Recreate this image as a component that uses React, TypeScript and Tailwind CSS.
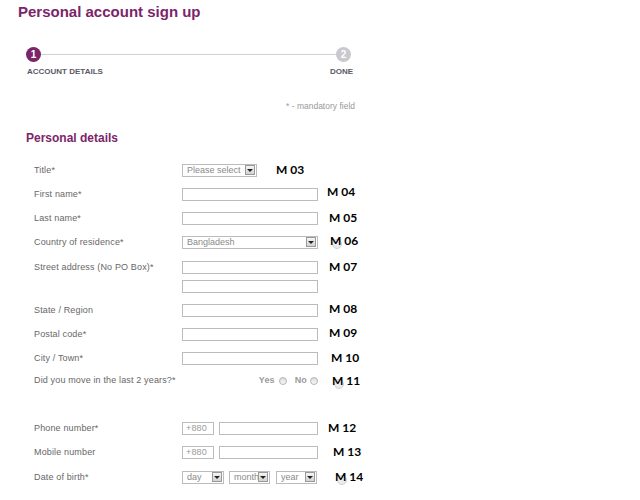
import type { ReactNode } from "react";

const Arrow = () => (
  <span className="flex h-[10px] w-[10px] shrink-0 items-center justify-center border border-[#999] bg-linear-to-b from-[#f6f6f6] to-[#d2d2d2]">
    <span className="h-0 w-0 border-x-[3px] border-t-[3px] border-x-transparent border-t-[#222]" />
  </span>
);

const Select = ({ w, text }: { w: string; text: string }) => (
  <div className={`flex h-[13px] shrink-0 items-center justify-between border border-[#bcbcbc] bg-white pl-[4px] pr-[1px] ${w}`}>
    <span className="overflow-hidden whitespace-nowrap text-[9px] leading-none tracking-normal text-[#8a8a8a]">{text}</span>
    <Arrow />
  </div>
);

const Input = ({ w = "w-[136px]", value, className = "" }: { w?: string; value?: string; className?: string }) => (
  <input
    type="text"
    readOnly
    defaultValue={value}
    className={`h-[13px] shrink-0 border border-[#bcbcbc] bg-white px-[3px] text-[9px] leading-none text-[#9a9a9a] outline-none ${w} ${className}`}
  />
);

const M = ({ children, className = "", ring = false }: { children: ReactNode; className?: string; ring?: boolean }) => (
  <span className={`relative shrink-0 font-['Lato',sans-serif] text-[12px] font-bold leading-none tracking-normal text-black ${className}`}>
    {ring && <span className="absolute left-[2px] top-[4px] h-[10px] w-[10px] rounded-full border border-[#d2d2d2] bg-[#ececec]" />}
    <span className="relative">{children}</span>
  </span>
);

const Row = ({ label, h = "h-[24px]", labelClass = "", children }: { label?: string; h?: string; labelClass?: string; children?: ReactNode }) => (
  <div className={`flex items-center ${h}`}>
    <div className={`w-[148px] shrink-0 leading-[10px] ${labelClass}`}>{label}</div>
    {children}
  </div>
);

const Radio = () => (
  <span className="block h-[8px] w-[8px] shrink-0 rounded-full border border-[#b4b4b4] bg-linear-to-b from-[#dcdcdc] to-[#f8f8f8]" />
);

export default function App() {
  return (
    <div className="h-[500px] w-[640px] overflow-hidden bg-white font-['Liberation_Sans',Arial,sans-serif]">
      <h1 className="pl-[18px] pt-[4px] text-[15px] font-bold leading-[15px] text-[#7b2569]">Personal account sign up</h1>

      {/* Stepper */}
      <div className="ml-[26px] mt-[28px] w-[325px]">
        <div className="flex items-center">
          <span className="flex h-[15px] w-[15px] items-center justify-center rounded-full bg-[#7b2569] text-[10px] font-bold leading-none text-white">1</span>
          <div className="h-px flex-1 bg-[#cfcfd4]" />
          <span className="flex h-[15px] w-[15px] items-center justify-center rounded-full bg-[#c9c9cf] text-[10px] font-bold leading-none text-white">2</span>
        </div>
        <div className="mt-[6px] flex justify-between text-[8px] font-bold leading-[8px] text-[#5b5866]">
          <span className="ml-px">ACCOUNT DETAILS</span>
          <span className="-mr-[2px]">DONE</span>
        </div>
      </div>

      <div className="mt-[26px] w-[355px] text-right text-[8.5px] leading-[9px] text-[#9a9a9a]">* - mandatory field</div>

      <h2 className="mt-[21px] pl-[26px] text-[12px] font-bold leading-[12px] text-[#7b2569]">Personal details</h2>

      <div className="ml-[34px] mt-[14px] flex flex-col text-[9px] tracking-[0.15px] text-[#676767]">
        <Row label="Title*">
          <Select w="w-[75px]" text="Please select" />
          <M className="ml-[19px]">M 03</M>
        </Row>
        <Row label="First name*">
          <Input />
          <M className="-mt-[4px] ml-[9px]">M 04</M>
        </Row>
        <Row label="Last name*">
          <Input />
          <M className="ml-[11px]">M 05</M>
        </Row>
        <Row label="Country of residence*">
          <Select w="w-[136px]" text="Bangladesh" />
          <M className="-mt-[2px] ml-[12px]" ring>
            M 06
          </M>
        </Row>
        <Row label="Street address (No PO Box)*" h="h-[26px]">
          <Input />
          <M className="ml-[11px]">M 07</M>
        </Row>
        <Row h="h-[18px]">
          <Input className="-mt-[5px]" />
        </Row>
        <Row label="State / Region">
          <Input />
          <M className="-mt-[2px] ml-[11px]">M 08</M>
        </Row>
        <Row label="Postal code*">
          <Input />
          <M className="-mt-[2px] ml-[11px]">M 09</M>
        </Row>
        <Row label="City / Town*">
          <Input />
          <M className="ml-[13px]">M 10</M>
        </Row>
        <Row label="Did you move in the last 2 years?*" h="h-[22px]" labelClass="-mt-[3px]">
          <div className="flex w-[136px] shrink-0 items-center justify-end font-bold text-[#9a9a9a]">
            <span>Yes</span>
            <span className="ml-[4px]">
              <Radio />
            </span>
            <span className="ml-[8px]">No</span>
            <span className="ml-[3px]">
              <Radio />
            </span>
          </div>
          <M className="ml-[14px]" ring>
            M 11
          </M>
        </Row>
        <div className="h-[24px]" />
        <Row label="Phone number*">
          <Input w="w-[32px]" value="+880" />
          <Input w="w-[99px]" className="ml-[5px]" />
          <M className="ml-[10px]">M 12</M>
        </Row>
        <Row label="Mobile number">
          <Input w="w-[32px]" value="+880" />
          <Input w="w-[99px]" className="ml-[5px]" />
          <M className="ml-[15px]">M 13</M>
        </Row>
        <Row label="Date of birth*" h="h-[26px]">
          <Select w="w-[42px]" text="day" />
          <div className="ml-[5px]">
            <Select w="w-[41px]" text="month" />
          </div>
          <div className="ml-[6px]">
            <Select w="w-[41px]" text="year" />
          </div>
          <M className="ml-[18px]" ring>
            M 14
          </M>
        </Row>
      </div>
    </div>
  );
}
